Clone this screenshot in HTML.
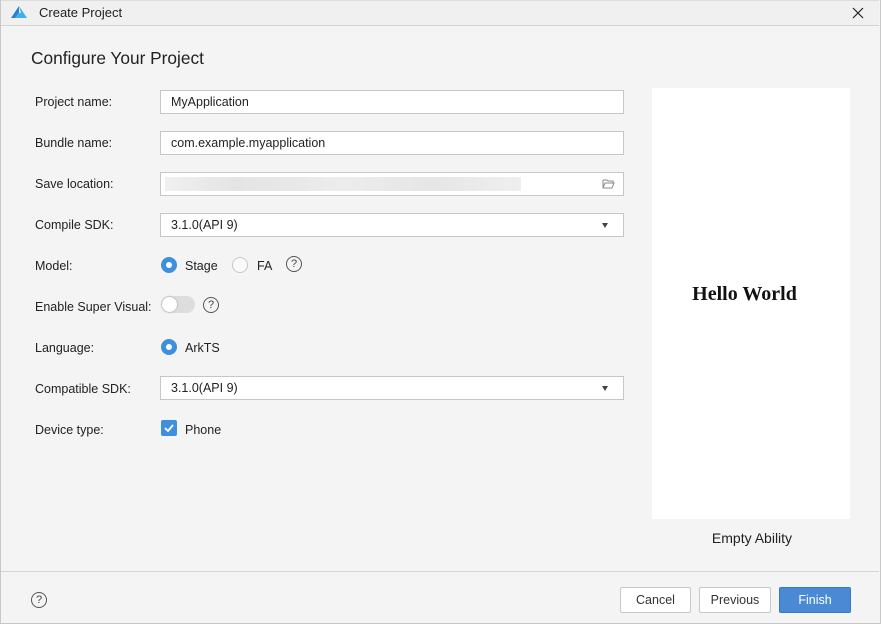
<!DOCTYPE html>
<html><head><meta charset="utf-8"><style>
*{box-sizing:border-box;margin:0;padding:0}
body{width:881px;height:624px;overflow:hidden;font-family:"Liberation Sans",sans-serif;font-size:12.5px;color:#222;background:#f4f4f4;position:relative}
.a{position:absolute}
.win{left:0;top:0;width:881px;height:624px;border:1px solid #c8c8c8;border-top:none}
.title{left:1px;top:0;width:878px;height:26px;background:#f0f0f0;border-bottom:1px solid #d4d4d4;border-top:1px solid #ddd}
.lbl{left:35px;font-size:12.5px;color:#222}
.inp{left:160px;width:464px;height:24px;background:#fff;border:1px solid #c6c6c6;padding-left:10px;line-height:23px;font-size:12.5px}
.radio{width:16px;height:16px;border-radius:50%}
.on{background:#3d8fe0;}
.on::after{content:"";position:absolute;left:5px;top:5px;width:6px;height:6px;border-radius:50%;background:#fff}
.off{border:1px solid #c8c8c8;background:#fafafa}
.q{width:16px;height:16px;border:1px solid #555;border-radius:50%;font-size:11px;text-align:center;line-height:14px;color:#444}
.btn{top:587px;height:26px;background:#fff;border:1px solid #c8c8c8;border-radius:2px;text-align:center;line-height:24px;font-size:12.5px;color:#333}
.arr{right:15px;top:9px;width:0;height:0;border-left:3.5px solid transparent;border-right:3.5px solid transparent;border-top:5px solid #444}
</style></head><body>
<div class="a win"></div>
<div class="a title"></div>
<svg class="a" style="left:10px;top:5px" width="18" height="14" viewBox="0 0 18 14"><path d="M9 1 L1 13 L7 13 L9 9 Z" fill="#2c7fd3"/><path d="M9 1 L17 13 L5 13 L8 8 L11 8 Z" fill="#42b0e8"/></svg>
<div class="a" style="left:39px;top:5px;font-size:13px">Create Project</div>
<svg class="a" style="left:852px;top:7px" width="12" height="12" viewBox="0 0 12 12"><path d="M1 1 L11 11 M11 1 L1 11" stroke="#222" stroke-width="1.2"/></svg>
<div class="a" style="left:31px;top:48px;font-size:17.3px;color:#222">Configure Your Project</div>

<div class="a lbl" style="top:95px">Project name:</div>
<div class="a inp" style="top:90px">MyApplication</div>
<div class="a lbl" style="top:136px">Bundle name:</div>
<div class="a inp" style="top:131px">com.example.myapplication</div>
<div class="a lbl" style="top:177px">Save location:</div>
<div class="a inp" style="top:172px"><div class="a" style="left:4px;top:4px;width:356px;height:14px;background:linear-gradient(90deg,#f0f0f0,#e4e4e4 20%,#ececec 50%,#e6e6e6 75%,#efefef)"></div>
<svg class="a" style="right:8px;top:5px" width="13" height="11" viewBox="0 0 13 11"><path d="M1 2 H5 L6 3 H11 V5 M1 2 V10 H10 L12 5 H3 L1 10" fill="none" stroke="#888"/></svg></div>
<div class="a lbl" style="top:218px">Compile SDK:</div>
<div class="a inp" style="top:213px">3.1.0(API 9)<div class="a arr"></div></div>
<div class="a lbl" style="top:259px">Model:</div>
<div class="a radio on" style="left:161px;top:257px"></div>
<div class="a" style="left:185px;top:259px">Stage</div>
<div class="a radio off" style="left:232px;top:257px"></div>
<div class="a" style="left:257px;top:259px">FA</div>
<div class="a q" style="left:286px;top:256px">?</div>
<div class="a lbl" style="top:300px">Enable Super Visual:</div>
<div class="a" style="left:161px;top:296px;width:34px;height:17px;border-radius:9px;background:#ddd"></div>
<div class="a" style="left:162px;top:297px;width:15px;height:15px;border-radius:50%;background:#fff;box-shadow:0 0 2px #999"></div>
<div class="a q" style="left:203px;top:297px">?</div>
<div class="a lbl" style="top:341px">Language:</div>
<div class="a radio on" style="left:161px;top:339px"></div>
<div class="a" style="left:185px;top:341px">ArkTS</div>
<div class="a lbl" style="top:382px">Compatible SDK:</div>
<div class="a inp" style="top:376px">3.1.0(API 9)<div class="a arr"></div></div>
<div class="a lbl" style="top:423px">Device type:</div>
<div class="a" style="left:161px;top:420px;width:16px;height:16px;background:#3d8fe0;border-radius:2px"><svg width="16" height="16"><path d="M4 8 L7 11 L12 5" fill="none" stroke="#fff" stroke-width="1.8"/></svg></div>
<div class="a" style="left:185px;top:423px">Phone</div>

<div class="a" style="left:652px;top:88px;width:198px;height:431px;background:#fff"></div>
<div class="a" style="left:652px;top:283px;width:185px;text-align:center;font-family:'Liberation Serif',serif;font-weight:bold;font-size:20px;color:#111">Hello World</div>
<div class="a" style="left:652px;top:530px;width:200px;text-align:center;font-size:14px">Empty Ability</div>

<div class="a" style="left:1px;top:571px;width:878px;height:1px;background:#d4d4d4"></div>
<div class="a q" style="left:31px;top:592px">?</div>
<div class="a btn" style="left:620px;width:71px">Cancel</div>
<div class="a btn" style="left:699px;width:72px">Previous</div>
<div class="a btn" style="left:779px;width:72px;background:#4a8ad4;border-color:#3a78c4;color:#fff">Finish</div>
</body></html>
